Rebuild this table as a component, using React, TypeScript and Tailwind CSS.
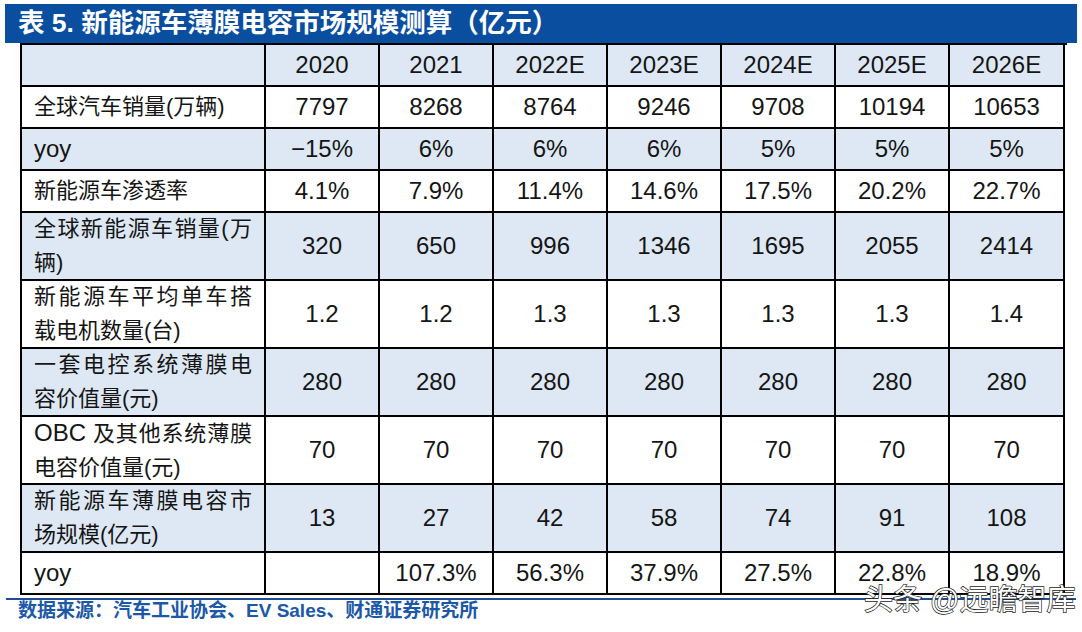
import React from 'react';

const FONT = 'font-["Liberation_Sans","Noto_Sans_CJK_SC",sans-serif]';

type Row = {
  label: React.ReactNode;
  vals: string[];
  tall?: boolean;
  blue?: boolean;
};

const rows: Row[] = [
  { label: '全球汽车销量(万辆)', vals: ['7797', '8268', '8764', '9246', '9708', '10194', '10653'] },
  { label: <span className="text-[24px]">yoy</span>, vals: ['−15%', '6%', '6%', '6%', '5%', '5%', '5%'], blue: true },
  { label: '新能源车渗透率', vals: ['4.1%', '7.9%', '11.4%', '14.6%', '17.5%', '20.2%', '22.7%'] },
  { label: '全球新能源车销量(万辆)', vals: ['320', '650', '996', '1346', '1695', '2055', '2414'], tall: true, blue: true },
  { label: '新能源车平均单车搭载电机数量(台)', vals: ['1.2', '1.2', '1.3', '1.3', '1.3', '1.3', '1.4'], tall: true },
  { label: '一套电控系统薄膜电容价值量(元)', vals: ['280', '280', '280', '280', '280', '280', '280'], tall: true, blue: true },
  {
    label: (
      <>
        <span className="text-[24px] leading-[34px]">OBC</span> 及其他系统薄膜电容价值量(元)
      </>
    ),
    vals: ['70', '70', '70', '70', '70', '70', '70'],
    tall: true,
  },
  { label: '新能源车薄膜电容市场规模(亿元)', vals: ['13', '27', '42', '58', '74', '91', '108'], tall: true, blue: true },
  { label: <span className="text-[24px]">yoy</span>, vals: ['', '107.3%', '56.3%', '37.9%', '27.5%', '22.8%', '18.9%'] },
];

const years = ['2020', '2021', '2022E', '2023E', '2024E', '2025E', '2026E'];

export default function App() {
  return (
    <div lang="zh-CN" className={`w-[1082px] h-[632px] bg-white relative overflow-hidden text-[#151515] ${FONT}`}>
      {/* title bar */}
      <div className="ml-[5px] mt-[4px] w-[1072px] h-[39px] bg-[#0a4e9f] text-white font-bold text-[26.5px] leading-none pl-[13px] flex items-center">
        表 5. 新能源车薄膜电容市场规模测算（亿元）
      </div>

      {/* table */}
      <div className="ml-[20px] w-[1047px] grid grid-cols-[244px_repeat(6,114px)_115px] border-l-2 border-t-2 border-black">
        <div className="h-[42px] bg-[#dde8f4] border-r-2 border-b-2 border-black" />
        {years.map((y) => (
          <div
            key={y}
            className="h-[42px] bg-[#dde8f4] border-r-2 border-b-2 border-black flex items-center justify-center text-[24px]"
          >
            {y}
          </div>
        ))}

        {rows.map((r, i) => {
          const h = r.tall ? 'h-[68px]' : 'h-[42px]';
          const bg = r.blue ? 'bg-[#dde8f4]' : 'bg-white';
          return (
            <React.Fragment key={i}>
              <div className={`${h} ${bg} border-r-2 border-b-2 border-black flex items-center px-[12px]`}>
                <div className="w-full text-[22px] leading-[34px] text-justify">{r.label}</div>
              </div>
              {r.vals.map((v, j) => (
                <div
                  key={j}
                  className={`${h} ${bg} border-r-2 border-b-2 border-black flex items-center justify-center text-[24px]`}
                >
                  {v}
                </div>
              ))}
            </React.Fragment>
          );
        })}
      </div>

      {/* source line */}
      <div className="ml-[6px] mt-[3px] w-[1070px] h-[2px] bg-[#1f4f92]" />
      <div className="ml-[18px] mt-[1px] text-[19px] leading-[20px] font-bold text-[#1b58a8]">
        数据来源：汽车工业协会、EV Sales、财通证券研究所
      </div>

      {/* watermark */}
      <div className="absolute left-[864px] top-[582px] text-[29px] leading-[36px] text-white [-webkit-text-stroke:1.4px_#222] [paint-order:stroke_fill] whitespace-nowrap">
        头条 @远瞻智库
      </div>
    </div>
  );
}
